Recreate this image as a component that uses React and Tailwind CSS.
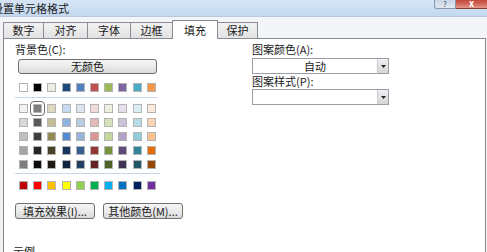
import React from 'react';

const font = { fontFamily: '"Noto Sans CJK SC", "Noto Sans", sans-serif' };

const themeRow = ['#ffffff', '#000000', '#eeece1', '#1f497d', '#4f81bd', '#c0504d', '#9bbb59', '#8064a2', '#4bacc6', '#f79646'];
const tintRows = [
    ['#f2f2f2', '#7f7f7f', '#ddd9c3', '#c6d9f0', '#dbe5f1', '#f2dcdb', '#ebf1dd', '#e5e0ec', '#dbeef3', '#fdeada'],
    ['#d8d8d8', '#595959', '#c4bd97', '#8db3e2', '#b8cce4', '#e5b9b7', '#d7e3bc', '#ccc1d9', '#b7dde8', '#fbd5b5'],
    ['#bfbfbf', '#3f3f3f', '#938953', '#548dd4', '#95b3d7', '#d99694', '#c3d69b', '#b2a2c7', '#92cddc', '#fac08f'],
    ['#a5a5a5', '#262626', '#494429', '#17365d', '#366092', '#953734', '#76923c', '#5f497a', '#31859b', '#e36c09'],
    ['#7f7f7f', '#0c0c0c', '#1d1b10', '#0f243e', '#244061', '#632423', '#4f6128', '#3f3151', '#205867', '#974806'],
];
const standardRow = ['#c00000', '#ff0000', '#ffc000', '#ffff00', '#92d050', '#00b050', '#00b0f0', '#0070c0', '#002060', '#7030a0'];

const tabs = [
    { label: '数字', w: 'w-[41px]' },
    { label: '对齐', w: 'w-[45px]' },
    { label: '字体', w: 'w-[44px]' },
    { label: '边框', w: 'w-[43px]' },
    { label: '填充', w: 'w-[46px]', active: true },
    { label: '保护', w: 'w-[41px]' },
];

const Swatch = ({ color, selected }) => (
    <div
        className={`w-[9px] h-[9px] shrink-0 border border-[#b4b4b4] ${selected ? 'outline outline-[#6b6b6b] outline-offset-2 rounded-[1px]' : ''}`}
        style={{ backgroundColor: color }}
    />
);

const SwatchRow = ({ colors, selectedIndex = -1, className = '' }) => (
    <div className={`flex gap-[5.2px] ${className}`}>
        {colors.map((c, i) => (
            <Swatch key={i} color={c} selected={i === selectedIndex} />
        ))}
    </div>
);

const Button = ({ children, className = '' }) => (
    <div className={`flex items-center justify-center border border-[#707070] rounded-[3px] bg-linear-to-b from-[#f4f4f4] via-[#ebebeb] to-[#d9d9d9] text-[11px] leading-none text-[#1a1a1a] ${className}`}>
        {children}
    </div>
);

const Select = ({ value }) => (
    <div className="flex h-[16px] w-[137px] border border-[#9a9ea8] bg-white">
        <div className="flex-1 flex items-center justify-center text-[11px] leading-none">{value}</div>
        <div className="w-[11px] border-l border-[#c8cbd2] bg-linear-to-b from-[#f0f0f0] to-[#d6d6d6] flex items-center justify-center">
            <svg width="5" height="3" viewBox="0 0 5 3">
                <path d="M0 0H5L2.5 3Z" fill="#222" />
            </svg>
        </div>
    </div>
);

export default function App() {
    return (
        <div className="w-[487px] h-[252px] overflow-hidden bg-[#f0f0f0] text-[#1a1a1a]" style={font}>
            {/* Title bar */}
            <div className="h-[17px] flex items-start justify-between bg-linear-to-b from-[#d6e5f5] to-[#c3d8ef] border-b border-[#b9c9db]">
                <div className="ml-[-8px] mt-[2px] text-[11px] leading-[12px]">设置单元格格式</div>
                <div className="flex">
                    <div className="w-[22px] h-[9px] rounded-bl-[3px] border border-t-0 border-[#8a96a8] bg-linear-to-b from-[#c9d6e6] to-[#e1e8f1] flex items-start justify-center text-[8px] leading-[7px] text-[#435468]">?</div>
                    <div className="w-[31px] h-[9px] border-b border-[#8a3a32] bg-linear-to-b from-[#c44a3c] via-[#d2665a] to-[#e6988d] flex items-start justify-center text-[9px] leading-[7px] font-bold text-white">x</div>
                </div>
            </div>

            {/* Tabs */}
            <div className="h-[21px] flex items-end pl-[3px] bg-[#f3f5f8]">
                {tabs.map((t) =>
                    t.active ? (
                        <div
                            key={t.label}
                            className={`${t.w} h-[19px] -ml-px -mb-px relative z-10 border border-b-0 border-[#898c95] bg-white flex items-center justify-center text-[11px] leading-none`}
                        >
                            {t.label}
                        </div>
                    ) : (
                        <div
                            key={t.label}
                            className={`${t.w} h-[16px] -ml-px first:ml-0 border border-b-0 border-[#898c95] bg-linear-to-b from-[#f2f2f2] to-[#e2e2e2] flex items-center justify-center text-[11px] leading-none`}
                        >
                            {t.label}
                        </div>
                    )
                )}
            </div>

            {/* Panel */}
            <div className="ml-[3px] mr-px h-[220px] border border-b-0 border-[#898c95] bg-white flex pt-[4px] pl-[11px]">
                {/* Left column */}
                <div className="w-[237px] shrink-0 flex flex-col">
                    <div className="h-[12px] text-[11px] leading-[12px]">背景色(C):</div>
                    <Button className="mt-[4px] ml-[3px] w-[139px] h-[15px]">无颜色</Button>
                    <SwatchRow colors={themeRow} className="mt-[9px] ml-[4px]" />
                    <div className="mt-[5px] h-px w-[143px] bg-[#c9d7e8]" />
                    <div className="mt-[6px] ml-[4px] flex flex-col gap-[5px]">
                        {tintRows.map((row, i) => (
                            <SwatchRow key={i} colors={row} selectedIndex={i === 0 ? 1 : -1} />
                        ))}
                    </div>
                    <div className="mt-[4px] h-px w-[145px] bg-[#c9d7e8]" />
                    <SwatchRow colors={standardRow} className="mt-[7px] ml-[4px]" />
                    <div className="mt-[13px] flex gap-[8px]">
                        <Button className="w-[80px] h-[16px]">填充效果(I)...</Button>
                        <Button className="w-[80px] h-[16px]">其他颜色(M)...</Button>
                    </div>
                    <div className="mt-[26px] -ml-[2px] text-[11px] leading-[12px]">示例</div>
                </div>

                {/* Right column */}
                <div className="flex flex-col">
                    <div className="h-[12px] text-[11px] leading-[12px]">图案颜色(A):</div>
                    <div className="mt-[3px]">
                        <Select value="自动" />
                    </div>
                    <div className="mt-[1px] h-[12px] text-[11px] leading-[12px]">图案样式(P):</div>
                    <div className="mt-[2px]">
                        <Select value="" />
                    </div>
                </div>
            </div>
        </div>
    );
}
